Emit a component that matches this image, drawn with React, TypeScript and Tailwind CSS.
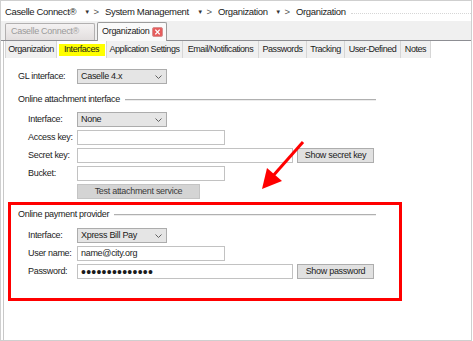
import React from 'react';

const crumbs = [
  { name: 'Caselle Connect®', w: 'w-[78px]' },
  { name: 'System Management', w: 'w-[91px]' },
  { name: 'Organization', w: 'w-[56px]' },
];

const tabs = [
  { name: 'Organization', w: 'w-[52px]' },
  { name: 'Interfaces', w: 'w-[50px]', active: true },
  { name: 'Application Settings', w: 'w-[76px]' },
  { name: 'Email/Notifications', w: 'w-[76px]' },
  { name: 'Passwords', w: 'w-[48px]' },
  { name: 'Tracking', w: 'w-[38px]' },
  { name: 'User-Defined', w: 'w-[56px]' },
  { name: 'Notes', w: 'w-[30px]' },
];

function Select({ value }: { value: string }) {
  return (
    <div className="flex h-[15px] w-[90px] items-center justify-between border border-[#acacac] bg-[#e5e5e5] pl-[3px] pr-[4px]">
      <span>{value}</span>
      <svg width="7" height="4" viewBox="0 0 7 4">
        <polyline points="0.5,0.5 3.5,3.5 6.5,0.5" fill="none" stroke="#606060" strokeWidth="1" />
      </svg>
    </div>
  );
}

function Input({ w, value }: { w: string; value?: string }) {
  return (
    <div className={`flex h-[15px] ${w} items-center border border-[#c2c2c2] bg-white pl-[3px]`}>
      {value}
    </div>
  );
}

function Button({ label, w }: { label: string; w: string }) {
  return (
    <div className={`ml-[4px] flex h-[15px] ${w} items-center justify-center border border-[#adadad] bg-[#e1e1e1]`}>
      {label}
    </div>
  );
}

function Row({ label, children }: { label: string; children: React.ReactNode }) {
  return (
    <div className="mt-[3px] flex h-[15px] items-center pl-[24px]">
      <span className="w-[49px]">{label}</span>
      {children}
    </div>
  );
}

function Section({ title, className }: { title: string; className: string }) {
  return (
    <div className={`flex h-[15px] items-center pl-[14px] pr-[95px] ${className}`}>
      <span>{title}</span>
      <div className="ml-[5px] h-[2px] flex-1 border-t border-b border-t-[#b0b0b0] border-b-[#ececec]" />
    </div>
  );
}

export default function App() {
  return (
    <div className="relative h-[341px] w-[473px] overflow-hidden bg-white font-['Liberation_Sans',Arial,sans-serif] text-[#1b1b1b]">
      <div className="flex h-[341px] w-[472px] flex-col border border-[#cfcfcf]">
        {/* breadcrumb */}
        <div className="flex h-[20px] items-center pl-[4px] pt-[2px] text-[9.5px] tracking-[-0.35px]">
          {crumbs.map((c) => (
            <React.Fragment key={c.name}>
              <span className={`${c.w} whitespace-nowrap`}>{c.name}</span>
              <span className="w-[8px] text-center text-[6px] text-[#333]">▼</span>
              <span className="mr-[4px] w-[10px] text-center text-[#555]">&gt;</span>
            </React.Fragment>
          ))}
          <span className="whitespace-nowrap">Organization</span>
          <div className="ml-[5px] mt-[3px] flex-1 border-t border-dotted border-[#d6d6d6]" />
        </div>

        {/* document tabs */}
        <div className="flex h-[20px] items-end gap-[2px] border-b border-[#8d8e93] bg-[#f0f0f0] pl-[4px] text-[9px] tracking-[-0.3px]">
          <div className="flex h-[17px] w-[90px] items-center rounded-t-[2px] border border-b-0 border-[#b2b0b0] bg-gradient-to-b from-[#f4f2f2] to-[#e2dede] pl-[5px] text-[#9a9a9a]">
            Caselle Connect®
          </div>
          <div className="relative -mb-px flex h-[19px] w-[70px] items-center rounded-t-[2px] border border-b-0 border-[#9c9c9c] bg-[#fafafa] pl-[4px]">
            <span>Organization</span>
            <svg className="ml-auto mr-[3px]" width="11" height="10" viewBox="0 0 11 10">
              <rect x="0.5" y="0.5" width="10" height="9" rx="1.5" fill="#e65c5c" stroke="#d89090" />
              <path d="M3.3 2.6 L7.7 7.4 M7.7 2.6 L3.3 7.4" stroke="#fff" strokeWidth="1.4" />
            </svg>
          </div>
        </div>

        {/* panel */}
        <div className="ml-[2px] flex flex-1 flex-col border-l border-[#c8c8c8] text-[9px] tracking-[-0.3px]">
          <div className="flex h-[17px] pl-[1px] tracking-[-0.45px]">
            {tabs.map((t, i) => (
              <div
                key={t.name}
                className={`flex h-full ${t.w} items-center justify-center border-r border-[#d6d6d6] ${
                  i === 0 ? 'border-l' : ''
                } ${t.active ? 'bg-white' : 'bg-[#f0f0f0]'}`}
              >
                {t.active ? (
                  <span className="flex h-[12px] w-[46px] items-center justify-center bg-[#ffff00]">{t.name}</span>
                ) : (
                  <span className="whitespace-nowrap">{t.name}</span>
                )}
              </div>
            ))}
          </div>

          <div className="mt-[11px] flex h-[15px] items-center pl-[14px]">
            <span className="w-[59px]">GL interface:</span>
            <Select value="Caselle 4.x" />
          </div>

          <Section title="Online attachment interface" className="mt-[8px]" />
          <div className="mt-[2px]">
            <Row label="Interface:">
              <Select value="None" />
            </Row>
            <Row label="Access key:">
              <Input w="w-[148px]" />
            </Row>
            <Row label="Secret key:">
              <Input w="w-[216px]" />
              <Button label="Show secret key" w="w-[77px]" />
            </Row>
            <Row label="Bucket:">
              <Input w="w-[148px]" />
            </Row>
            <div className="mt-[3px] flex h-[15px] pl-[73px]">
              <div className="flex h-[15px] w-[123px] items-center justify-center border border-[#c4c4c4] bg-[#d4d4d4] text-[#3a3a3a]">
                Test attachment service
              </div>
            </div>
          </div>

          <Section title="Online payment provider" className="mt-[8px]" />
          <div className="mt-[3px]">
            <Row label="Interface:">
              <Select value="Xpress Bill Pay" />
            </Row>
            <Row label="User name:">
              <Input w="w-[148px]" value="name@city.org" />
            </Row>
            <Row label="Password:">
              <div className="flex h-[15px] w-[216px] items-center border border-[#c2c2c2] bg-white pl-[3px] text-[14px] leading-none tracking-[0.25px]">
                ••••••••••••••
              </div>
              <Button label="Show password" w="w-[77px]" />
            </Row>
          </div>
        </div>
      </div>

      {/* annotation overlay */}
      <div className="pointer-events-none absolute left-[8px] top-[202px] h-[99px] w-[394px] border-[3px] border-[#ff0000]" />
      <svg className="pointer-events-none absolute left-0 top-0" width="473" height="341" viewBox="0 0 473 341">
        <line x1="303" y1="142" x2="272" y2="177" stroke="#ff0000" strokeWidth="3" />
        <polygon points="262,189 267,168 282,181" fill="#ff0000" />
      </svg>
    </div>
  );
}
